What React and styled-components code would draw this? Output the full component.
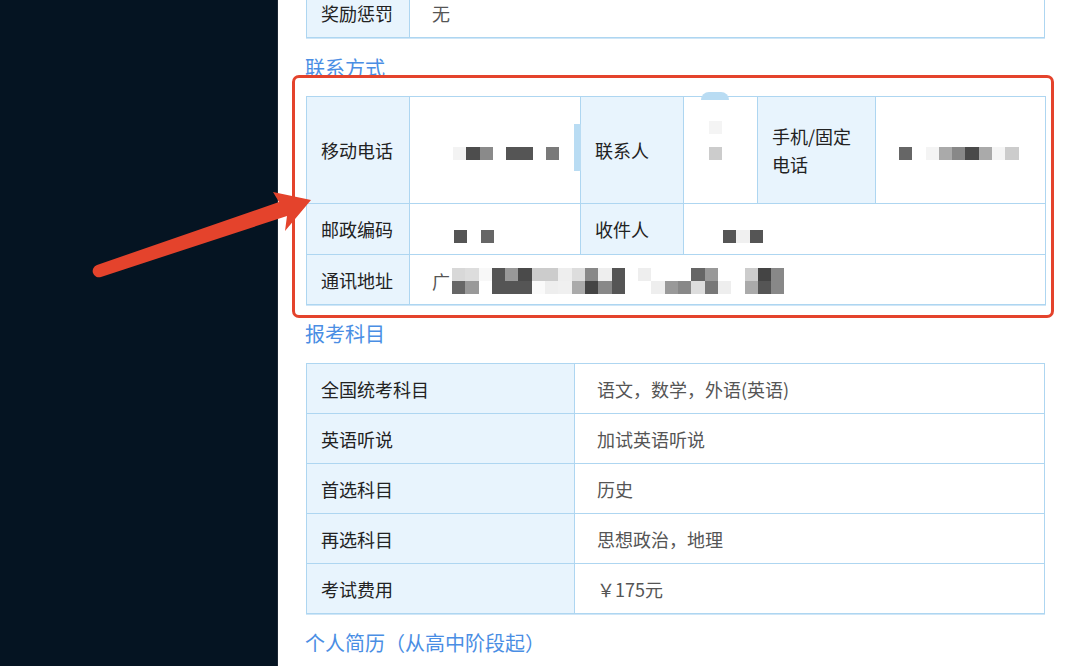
import React from "react";
import styled, { createGlobalStyle } from "styled-components";

const Global = createGlobalStyle`
  html, body { margin: 0; padding: 0; background: #ffffff; }
  body { font-family: "Noto Sans CJK SC", "Noto Sans", sans-serif; }
`;

const Page = styled.div`
  position: relative;
  display: flex;
  width: 1080px;
  height: 666px;
  overflow: hidden;
`;

const Sidebar = styled.div`
  width: 277px;
  flex: none;
  background: #051422;
`;

const Main = styled.div`
  flex: 1;
  background: #ffffff;
  padding-left: 28px;
  border-left: 1px solid #1b2633;
`;

const Content = styled.div`
  margin-top: -13px;
  width: 739px;
`;

const Heading = styled.h3`
  margin: 0;
  padding: ${(p) => (p.$first ? "16px 0 14px" : "15px 0 15px")};
  line-height: 28px;
  font-size: 20px;
  font-weight: 400;
  color: #4a8ee4;
  margin-left: -1px;
`;

const Table = styled.table`
  width: 739px;
  border-collapse: collapse;
  table-layout: fixed;
  font-size: 18px;
  box-shadow: 0 1px 0 #cfe6f7;
`;

const Cell = styled.td`
  border: 1px solid #aed6f1;
  height: ${(p) => p.$h || 49}px;
  padding: 0 ${(p) => (p.$label ? 14 : 0)}px 0 ${(p) => (p.$label ? 14 : 22)}px;
  background: ${(p) => (p.$label ? "#e8f4fd" : "#ffffff")};
  color: ${(p) => (p.$label ? "#222222" : "#555555")};
  line-height: 28px;
  vertical-align: middle;
  position: relative;
`;

const Annotated = styled.div`
  position: relative;
`;

const RedBox = styled.div`
  position: absolute;
  top: -21px;
  left: -14px;
  right: -9px;
  bottom: -13px;
  border: 3px solid #e4432c;
  border-radius: 7px;
  pointer-events: none;
`;

const Mosaic = styled.div`
  display: inline-grid;
  grid-auto-rows: 13px;
  grid-template-columns: repeat(${(p) => p.$cols}, 13.3px);
  margin-left: ${(p) => p.$left || 0}px;
  margin-top: ${(p) => p.$top || 0}px;
  vertical-align: middle;
`;

const Block = styled.span`
  background: ${(p) => p.$c || "transparent"};
`;

const Glyph = styled.span`
  vertical-align: middle;
`;

const Smudge = styled.span`
  position: absolute;
  background: #b9dcf3;
  border-radius: ${(p) => p.$r};
  left: ${(p) => p.$x}px;
  top: ${(p) => p.$y}px;
  width: ${(p) => p.$w}px;
  height: ${(p) => p.$hh}px;
`;

const ArrowLayer = styled.svg`
  position: absolute;
  left: 0;
  top: 0;
  pointer-events: none;
`;

function Pixels({ rows, left, top }) {
  const cols = rows[0].length;
  return (
    <Mosaic $cols={cols} $left={left} $top={top}>
      {rows.flat().map((c, i) => (
        <Block key={i} $c={c} />
      ))}
    </Mosaic>
  );
}

const _ = null;

const subjects = [
  ["全国统考科目", "语文，数学，外语(英语)"],
  ["英语听说", "加试英语听说"],
  ["首选科目", "历史"],
  ["再选科目", "思想政治，地理"],
  ["考试费用", "￥175元"],
];

export default function App() {
  return (
    <>
      <Global />
      <Page>
        <Sidebar />
        <Main>
          <Content>
            <Table>
              <colgroup>
                <col style={{ width: 103 }} />
                <col />
              </colgroup>
              <tbody>
                <tr>
                  <Cell $label>奖励惩罚</Cell>
                  <Cell>无</Cell>
                </tr>
              </tbody>
            </Table>

            <Heading $first>联系方式</Heading>
            <Annotated>
              <Table>
                <colgroup>
                  <col style={{ width: 103 }} />
                  <col style={{ width: 171 }} />
                  <col style={{ width: 103 }} />
                  <col style={{ width: 74 }} />
                  <col style={{ width: 118 }} />
                  <col style={{ width: 170 }} />
                </colgroup>
                <tbody>
                  <tr>
                    <Cell $label $h={106}>移动电话</Cell>
                    <Cell $h={106}>
                      <Pixels left={21} rows={[["#f3f3f3", "#4d4d4d", "#8a8a8a", _, "#555555", "#555555", _, "#7a7a7a"]]} />
                      <Smudge $x={164} $y={27} $w={9} $hh={47} $r="0 4px 4px 0" />
                    </Cell>
                    <Cell $label $h={106}>联系人</Cell>
                    <Cell $h={106}>
                      <Pixels left={3} top={-26} rows={[["#f4f4f4"], [_], ["#cccccc"]]} />
                      <Smudge $x={17} $y={-5} $w={28} $hh={8} $r="14px 14px 0 0" />
                    </Cell>
                    <Cell $label $h={106}>手机/固定电话</Cell>
                    <Cell $h={106}>
                      <Pixels left={1} rows={[["#666666", _, "#f4f4f4", "#aaaaaa", "#888888", "#4a4a4a", "#aaaaaa", "#f5f5f5", "#cccccc"]]} />
                    </Cell>
                  </tr>
                  <tr>
                    <Cell $label $h={50}>邮政编码</Cell>
                    <Cell $h={50}>
                      <Pixels left={22} top={8} rows={[["#555555", _, "#666666"]]} />
                    </Cell>
                    <Cell $label $h={50}>收件人</Cell>
                    <Cell $h={50} colSpan={3}>
                      <Pixels left={17} top={8} rows={[["#555555", "#f0f0f0", "#555555"]]} />
                    </Cell>
                  </tr>
                  <tr>
                    <Cell $label>通讯地址</Cell>
                    <Cell colSpan={5}>
                      <Glyph>广</Glyph>
                      <Pixels
                        left={2}
                        rows={[
                          ["#d8d8d8", "#dddddd", "#f8f8f8", "#555555", "#999999", "#4a4a4a", "#cccccc", "#cccccc", "#eeeeee", "#dddddd", "#888888", "#eeeeee", "#555555", _, "#eeeeee", _, _, _, "#666666", "#999999", _, _, "#cccccc", "#444444", "#888888"],
                          ["#666666", "#999999", _, "#555555", "#555555", "#555555", "#fafafa", "#eeeeee", "#f0f0f0", "#aaaaaa", "#444444", "#888888", "#555555", _, _, "#eeeeee", "#999999", "#888888", "#dddddd", "#777777", "#eeeeee", _, "#aaaaaa", "#555555", "#888888"],
                        ]}
                      />
                    </Cell>
                  </tr>
                </tbody>
              </Table>
              <RedBox />
            </Annotated>

            <Heading>报考科目</Heading>
            <Table>
              <colgroup>
                <col style={{ width: 268 }} />
                <col />
              </colgroup>
              <tbody>
                {subjects.map(([k, v]) => (
                  <tr key={k}>
                    <Cell $label>{k}</Cell>
                    <Cell>{v}</Cell>
                  </tr>
                ))}
              </tbody>
            </Table>

            <Heading>个人简历（从高中阶段起）</Heading>
          </Content>
        </Main>
        <ArrowLayer width="1080" height="666" viewBox="0 0 1080 666">
          <path
            d="M 97 265 L 279 202 L 273 192 L 311 200 L 285 231 L 287 216 L 101 277 A 6 6 0 0 1 97 265 Z"
            fill="#e4432c"
          />
        </ArrowLayer>
      </Page>
    </>
  );
}
